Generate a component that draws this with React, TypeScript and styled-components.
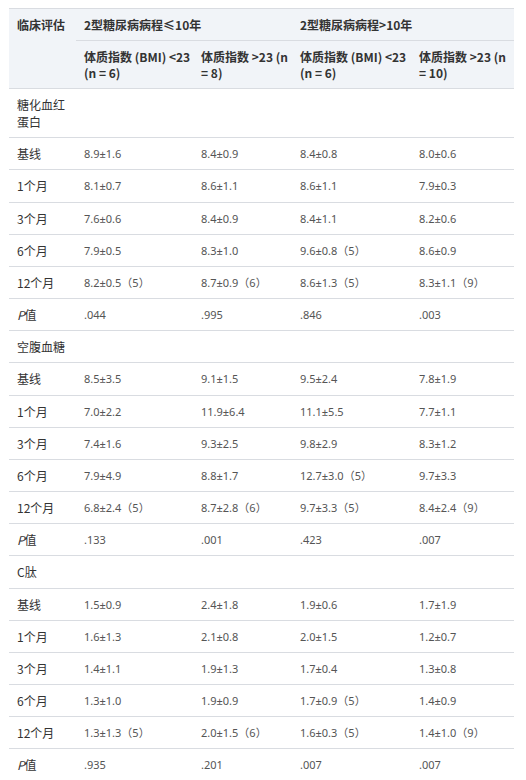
import React from "react";
import styled, { createGlobalStyle } from "styled-components";

const GlobalStyle = createGlobalStyle`
  body {
    margin: 0;
    background: #ffffff;
    font-family: "Noto Sans CJK SC", "Noto Sans", sans-serif;
  }
`;

type Row = { label: string; values?: string[]; italicP?: boolean };

type Section = { title: string; rows: Row[] };

const sections: Section[] = [
  {
    title: "糖化血红蛋白",
    rows: [
      { label: "基线", values: ["8.9±1.6", "8.4±0.9", "8.4±0.8", "8.0±0.6"] },
      { label: "1个月", values: ["8.1±0.7", "8.6±1.1", "8.6±1.1", "7.9±0.3"] },
      { label: "3个月", values: ["7.6±0.6", "8.4±0.9", "8.4±1.1", "8.2±0.6"] },
      { label: "6个月", values: ["7.9±0.5", "8.3±1.0", "9.6±0.8（5）", "8.6±0.9"] },
      { label: "12个月", values: ["8.2±0.5（5）", "8.7±0.9（6）", "8.6±1.3（5）", "8.3±1.1（9）"] },
      { label: "值", italicP: true, values: [".044", ".995", ".846", ".003"] },
    ],
  },
  {
    title: "空腹血糖",
    rows: [
      { label: "基线", values: ["8.5±3.5", "9.1±1.5", "9.5±2.4", "7.8±1.9"] },
      { label: "1个月", values: ["7.0±2.2", "11.9±6.4", "11.1±5.5", "7.7±1.1"] },
      { label: "3个月", values: ["7.4±1.6", "9.3±2.5", "9.8±2.9", "8.3±1.2"] },
      { label: "6个月", values: ["7.9±4.9", "8.8±1.7", "12.7±3.0（5）", "9.7±3.3"] },
      { label: "12个月", values: ["6.8±2.4（5）", "8.7±2.8（6）", "9.7±3.3（5）", "8.4±2.4（9）"] },
      { label: "值", italicP: true, values: [".133", ".001", ".423", ".007"] },
    ],
  },
  {
    title: "C肽",
    rows: [
      { label: "基线", values: ["1.5±0.9", "2.4±1.8", "1.9±0.6", "1.7±1.9"] },
      { label: "1个月", values: ["1.6±1.3", "2.1±0.8", "2.0±1.5", "1.2±0.7"] },
      { label: "3个月", values: ["1.4±1.1", "1.9±1.3", "1.7±0.4", "1.3±0.8"] },
      { label: "6个月", values: ["1.3±1.0", "1.9±0.9", "1.7±0.9（5）", "1.4±0.9"] },
      { label: "12个月", values: ["1.3±1.3（5）", "2.0±1.5（6）", "1.6±0.3（5）", "1.4±1.0（9）"] },
      { label: "值", italicP: true, values: [".935", ".201", ".007", ".007"] },
    ],
  },
];

const Page = styled.div`
  padding: 8px 12px 0 9px;
`;

const Table = styled.table`
  width: 505px;
  table-layout: fixed;
  border-collapse: collapse;
  border-top: 1px solid #d9dce1;
`;

const Head = styled.thead`
  background: #f1f4f8;
`;

const HeadCell = styled.th`
  text-align: left;
  vertical-align: top;
  font-size: 12px;
  font-weight: 700;
  line-height: 16px;
  color: #333333;
  padding: 8px 1px 7px 8px;
  border-bottom: 1px solid #d9dce1;
`;

const BodyRow = styled.tr`
  border-bottom: 1px solid #d9dce1;
`;

const LabelCell = styled.td`
  vertical-align: top;
  font-size: 12px;
  line-height: 17.15px;
  color: #333333;
  padding: 7px 8px;
`;

const ValueCell = styled.td`
  vertical-align: top;
  font-family: "Noto Sans", "Noto Sans CJK SC", sans-serif;
  font-size: 11px;
  line-height: 17.15px;
  color: #555555;
  padding: 7px 8px;
  white-space: nowrap;
`;

const PMark = styled.i`
  font-style: italic;
`;

export default function App() {
  return (
    <Page>
      <GlobalStyle />
      <Table>
        <colgroup>
          <col style={{ width: 67 }} />
          <col style={{ width: 117 }} />
          <col style={{ width: 99 }} />
          <col style={{ width: 119 }} />
          <col style={{ width: 103 }} />
        </colgroup>
        <Head>
          <tr>
            <HeadCell rowSpan={2}>临床评估</HeadCell>
            <HeadCell colSpan={2}>2型糖尿病病程≤10年</HeadCell>
            <HeadCell colSpan={2}>2型糖尿病病程&gt;10年</HeadCell>
          </tr>
          <tr>
            <HeadCell>体质指数 (BMI) &lt;23 (n = 6)</HeadCell>
            <HeadCell>体质指数 &gt;23 (n = 8)</HeadCell>
            <HeadCell>体质指数 (BMI) &lt;23 (n = 6)</HeadCell>
            <HeadCell>体质指数 &gt;23 (n = 10)</HeadCell>
          </tr>
        </Head>
        <tbody>
          {sections.map((section) => (
            <React.Fragment key={section.title}>
              <BodyRow>
                <LabelCell>{section.title}</LabelCell>
                <ValueCell />
                <ValueCell />
                <ValueCell />
                <ValueCell />
              </BodyRow>
              {section.rows.map((row, i) => (
                <BodyRow key={i}>
                  <LabelCell>
                    {row.italicP && <PMark>P</PMark>}
                    {row.label}
                  </LabelCell>
                  {row.values?.map((v, j) => (
                    <ValueCell key={j}>{v}</ValueCell>
                  ))}
                </BodyRow>
              ))}
            </React.Fragment>
          ))}
        </tbody>
      </Table>
    </Page>
  );
}
